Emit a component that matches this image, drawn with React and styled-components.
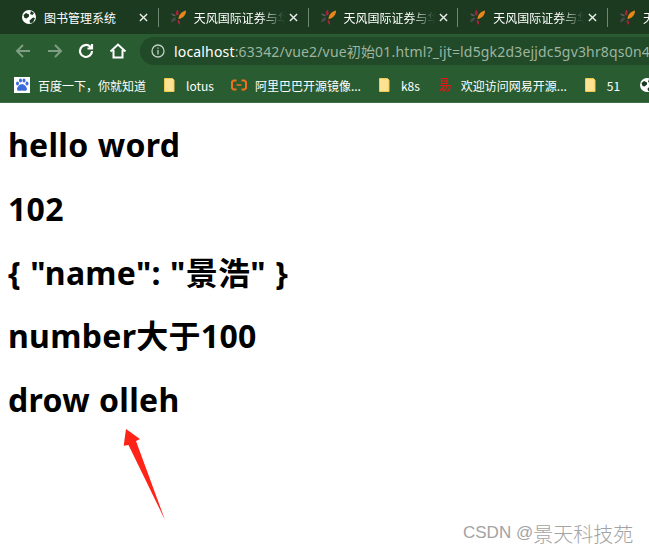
import React from 'react';
import styled, { createGlobalStyle } from 'styled-components';

const Global = createGlobalStyle`
  html, body { margin: 0; padding: 0; background: #fff; }
  body { width: 649px; height: 553px; overflow: hidden; font-family: "Noto Sans", "Noto Sans CJK SC", sans-serif; }
`;
const Page = styled.div`position: relative; width: 649px; height: 553px; overflow: hidden;`;
const Chrome = styled.header`height: 103px; display: flex; flex-direction: column; border-bottom: 1px solid #3f6e46; box-sizing: border-box;`;
const TabStrip = styled.div`height: 34px; background: #1b3a20; display: flex; padding-left: 9px; overflow: hidden; flex: none;`;
const Tab = styled.div`
  flex: none; width: 149.75px; height: 34px; box-sizing: border-box; display: flex; align-items: center;
  padding: 0 12px; position: relative; color: #fff; font-size: 12px;
  &::after { content: ""; position: absolute; right: 0; top: 8px; height: 19px; width: 1px; background: #6d8871; }
`;
const TabTitle = styled.span`
  margin-left: 7px; width: 91px; overflow: hidden; white-space: nowrap; flex: none; font-family: "Noto Sans CJK SC", sans-serif;
  ${p => p.$fade && `-webkit-mask-image: linear-gradient(90deg, #000 72%, transparent 100%);`}
`;
const Close = styled.svg`width: 9px; height: 9px; margin-left: 4px; flex: none; stroke: #e8eee9; stroke-width: 1.6; fill: none;`;
const ToolBar = styled.div`height: 34px; background: #2a5c31; display: flex; align-items: center; padding-left: 14px; flex: none;`;
const NavIcon = styled.svg`width: 18px; height: 18px; flex: none; margin-right: 13.5px; fill: none; stroke: ${p => p.$dim ? '#7f9d83' : '#fff'}; stroke-width: 2;`;
const Omnibox = styled.div`
  flex: none; width: 520px; height: 28px; border-radius: 14px 0 0 14px; background: #214a28;
  display: flex; align-items: center; padding-left: 11px; box-sizing: border-box; white-space: nowrap; overflow: hidden;
  font-family: "Noto Sans", "Noto Sans CJK SC", sans-serif; font-size: 14px; letter-spacing: 0.17px; color: #9db5a0;
`;
const Host = styled.span`color: #fff; margin-left: 9px;`;
const BookmarkBar = styled.div`height: 34px; background: #2a5c31; display: flex; align-items: center; padding-left: 14px; flex: none; overflow: hidden; color: #fff; font-size: 12px; white-space: nowrap;`;
const Bookmark = styled.div`display: flex; align-items: center; flex: none; margin-right: ${p => p.$gap}px; font-family: "Noto Sans CJK SC", "Noto Sans", sans-serif;`;
const BookmarkIcon = styled.svg`width: 16px; height: 16px; margin-right: 8px; flex: none;`;
const Content = styled.main`padding: 0 8px;`;
const Heading = styled.h1`
  margin: 0; padding-top: 21px; font-size: 32px; line-height: 42.75px; font-weight: 700; color: #000;
  letter-spacing: 0.3px; word-spacing: 0.6px;
  font-family: "Noto Sans", "Noto Sans CJK SC", sans-serif; white-space: nowrap;
`;
const Arrow = styled.svg`position: absolute; left: 120px; top: 425px; width: 50px; height: 100px;`;
const Watermark = styled.div`
  position: absolute; left: 463px; top: 519px; height: 28px; display: flex; align-items: center; font-size: 17px; color: #a3a3a3; white-space: nowrap;
  font-family: "Liberation Sans", "Noto Sans CJK SC", sans-serif;
`;
const WatermarkName = styled.span`font-size: 20px; font-family: "Noto Sans CJK SC", sans-serif; font-weight: 300;`;

const Globe = ({ size = 16 }) => (
  <svg width={size} height={size} viewBox="0 0 16 16" style={{ flex: 'none' }}>
    <circle cx="8" cy="8" r="7" fill="#fff" />
    <path d="M2.500 6l2.500-2 3 1.500 0 2-2.500 2-2-.5zM10 2l3 2-1.500 2-2.500-1zM8.500 11.500l3.500-3 2 .5-2 4.500-3 .5z" fill="#1b3a20" />
  </svg>
);
const Flower = () => (
  <svg width="16" height="16" viewBox="0 0 16 16" style={{ flex: 'none' }}>
    <path d="M7.500 10C7.500 6 10.500 2.500 15 1.500 15 6 12 9.500 7.500 10z" fill="#e8861a" />
    <path d="M5 6C4.500 4 5 2 6.500 .5 7.800 2 8 4 7 6.500z" fill="#a5243a" />
    <path d="M7 10.500c1.500.5 2.500 2.500 2 5.200-2-.5-3-2.700-2-5.200z" fill="#a5243a" />
    <path d="M0 4.500c2 0 4 .7 5 2.500-2 .8-4 0-5-2.500z" fill="#5a5a5a" />
    <path d="M0 13c0-2.500 2-4.500 5-4.500 .2 2.800-2 4.500-5 4.500z" fill="#4a4a4a" />
  </svg>
);
const CloseIcon = () => <Close viewBox="0 0 10 10"><path d="M1 1l8 8M9 1l-8 8" /></Close>;
const Folder = () => (
  <BookmarkIcon viewBox="0 0 16 16">
    <path d="M2.500 1.500h8l1.500 1.500v11.500H2.500z" fill="#fde293" stroke="#f3c94f" strokeWidth="1" />
  </BookmarkIcon>
);

const tabs = Array.from({ length: 3 });
const bookmarks = [
  { label: '百度一下，你就知道', gap: 16, icon: (
    <BookmarkIcon viewBox="0 0 16 16">
      <rect width="16" height="16" fill="#fff" />
      <g fill="#3a6bdc"><ellipse cx="3.500" cy="6.500" rx="1.500" ry="2" /><ellipse cx="6.500" cy="3.500" rx="1.500" ry="2" /><ellipse cx="10" cy="3.500" rx="1.500" ry="2" /><ellipse cx="13" cy="6.500" rx="1.500" ry="2" /><path d="M8 7c2 0 5 3 5 5s-2.500 2-5 1.500C5.500 14 3 14 3 12s3-5 5-5z" /></g>
    </BookmarkIcon>) },
  { label: 'lotus', gap: 17, icon: <Folder /> },
  { label: '阿里巴巴开源镜像...', gap: 16, icon: (
    <BookmarkIcon viewBox="0 0 16 16">
      <path d="M5.500 3.500H2.500L1 5v6l1.500 1.500h3M10.500 3.500h3L15 5v6l-1.500 1.500h-3" fill="none" stroke="#f0711c" strokeWidth="2" />
      <path d="M5.500 8h5" stroke="#f0711c" strokeWidth="1.500" />
    </BookmarkIcon>) },
  { label: 'k8s', gap: 17, icon: <Folder /> },
  { label: '欢迎访问网易开源...', gap: 16, icon: (
    <BookmarkIcon viewBox="0 0 16 16">
      <path d="M4.500 1.500h5.500v5H4.500zM4.500 4h5.500M3 8.500h10c.3 2.500-.7 5-3.500 6M7 9c-.5 2-2 3.500-4.500 4.500M10 9.500c-.6 2-2.200 3.800-4.500 5" fill="none" stroke="#ee1118" strokeWidth="1.200" />
    </BookmarkIcon>) },
  { label: '51', gap: 19, icon: <Folder /> },
  { label: '', gap: 0, icon: <Globe /> },
];

const lines = ['hello word', '102', '{ "name": "景浩" }', 'number大于100', 'drow olleh'];

export default function App() {
  return (
    <Page>
      <Global />
      <Chrome>
        <TabStrip>
          <Tab>
            <Globe />
            <TabTitle>图书管理系统</TabTitle>
            <CloseIcon />
          </Tab>
          {tabs.map((_, i) => (
            <Tab key={i}>
              <Flower />
              <TabTitle $fade>天风国际证券与华</TabTitle>
              <CloseIcon />
            </Tab>
          ))}
          <Tab>
            <Flower />
            <TabTitle $fade>天风国际证券与华</TabTitle>
          </Tab>
        </TabStrip>
        <ToolBar>
          <NavIcon $dim viewBox="0 0 18 18"><path d="M16 9H3M9 3L3 9l6 6" /></NavIcon>
          <NavIcon $dim viewBox="0 0 18 18"><path d="M2 9h13M9 3l6 6-6 6" /></NavIcon>
          <NavIcon viewBox="0 0 18 18" style={{ strokeWidth: 2.2 }}><path d="M15 9a6 6 0 1 1-1.800-4.300L15 6M15 2v4.500h-4.500" /></NavIcon>
          <NavIcon viewBox="0 0 18 18"><path d="M1.500 9.500L9 2.500l7.500 7M4.500 8v7.500h9V8" /></NavIcon>
          <Omnibox>
            <svg width="14" height="14" viewBox="0 0 14 14" style={{ flex: 'none' }}>
              <circle cx="7" cy="7" r="6" fill="none" stroke="#c2d0c4" strokeWidth="1.300" />
              <path d="M7 6v4.500M7 3.500v1.300" stroke="#c2d0c4" strokeWidth="1.300" />
            </svg>
            <Host>localhost</Host>:63342/vue2/vue初始01.html?_ijt=ld5gk2d3ejjdc5gv3hr8qs0n4
          </Omnibox>
        </ToolBar>
        <BookmarkBar>
          {bookmarks.map((b, i) => (
            <Bookmark key={i} $gap={b.gap}>{b.icon}{b.label}</Bookmark>
          ))}
        </BookmarkBar>
      </Chrome>
      <Content>
        {lines.map(l => <Heading key={l}>{l}</Heading>)}
      </Content>
      <Arrow viewBox="0 0 50 100">
        <path d="M6 4L20 14 16 16 45 95 8.500 20 3.700 20.700z" fill="#ff2318" />
      </Arrow>
      <Watermark>CSDN @<WatermarkName>景天科技苑</WatermarkName></Watermark>
    </Page>
  );
}
